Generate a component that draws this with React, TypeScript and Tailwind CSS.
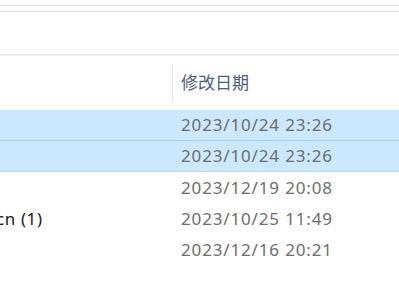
const rows = [
  { name: "", date: "2023/10/24 23:26", sel: true },
  { name: "", date: "2023/10/24 23:26", sel: true },
  { name: "", date: "2023/12/19 20:08", sel: false },
  { name: "cn (1)", date: "2023/10/25 11:49", sel: false },
  { name: "", date: "2023/12/16 20:21", sel: false },
];

export default function App() {
  return (
    <div
      className="relative h-[300px] w-[399px] overflow-hidden bg-white"
      style={{ fontFamily: '"Noto Sans", "Noto Sans CJK SC", sans-serif' }}
    >
      <div className="h-[5px]" />
      <div className="h-px bg-[#e3e3e3]" />
      <div className="h-[5px]" />
      <div className="h-px bg-[#e3e3e3]" />
      <div className="h-[42px]" />
      <div className="h-[2px] bg-[#ececec]" />
      {/* header */}
      <div className="flex h-[54px] items-center">
        <div className="w-[172px]" />
        <div className="flex h-full items-center">
          <div className="h-[38px] w-px bg-[#e5e5e5]" />
          <span className="pl-[8px] text-[17px] text-[#4c607a]">修改日期</span>
        </div>
      </div>
      {rows.map((r, i) => (
        <div
          key={i}
          className={
            "flex h-[31px] items-center " +
            (r.sel
              ? i === 0
                ? "border-b border-[#99d1ff] bg-[#cce8ff]"
                : "border-b border-[#b3dcff] bg-[#cce8ff]"
              : "")
          }
        >
          <div className="flex w-[181px] justify-start overflow-hidden">
            <span className="-ml-[4px] block text-[17px] tracking-[0.6px] whitespace-nowrap text-[#1a1a1a]">
              {r.name}
            </span>
          </div>
          <span className="text-[17px] tracking-[0.85px] whitespace-nowrap text-[#6d6d6d]">{r.date}</span>
        </div>
      ))}
    </div>
  );
}
